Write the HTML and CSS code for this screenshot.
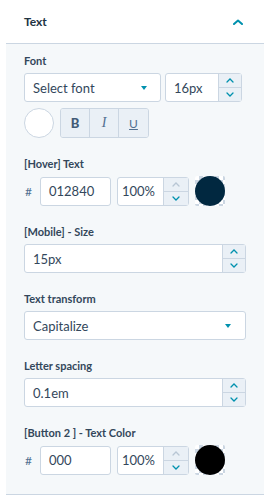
FILE: index.html
```html
<!DOCTYPE html>
<html lang="en">
<head>
    <meta charset="UTF-8">
    <meta name="viewport" content="width=device-width, initial-scale=1.0">
    <title>Text settings</title>
    <link rel="stylesheet" href="styles.css">
</head>
<body>
    <section class="panel">
        <header class="panel-head">
            <span>Text</span>
            <svg class="chev-up" width="10" height="6" viewBox="0 0 10 6"><path d="M1 5L5 1.5L9 5" fill="none" stroke="#0091ae" stroke-width="2" stroke-linecap="round" stroke-linejoin="round"/></svg>
        </header>
        <div class="panel-body">
            <div class="field">
                <label>Font</label>
                <div class="row">
                    <div class="select small">
                        <span>Select font</span>
                        <i class="caret"></i>
                    </div>
                    <div class="number size">
                        <span class="val">16px</span>
                        <div class="spin">
                            <div class="up"><svg width="8" height="5" viewBox="0 0 8 5"><path d="M1 4L4 1L7 4" fill="none" stroke="#0091ae" stroke-width="1.3" stroke-linecap="round"/></svg></div>
                            <div class="down"><svg width="8" height="5" viewBox="0 0 8 5"><path d="M1 1L4 4L7 1" fill="none" stroke="#0091ae" stroke-width="1.3" stroke-linecap="round"/></svg></div>
                        </div>
                    </div>
                </div>
                <div class="row styles">
                    <div class="circle"></div>
                    <div class="btn-group">
                        <button class="b">B</button>
                        <button class="i">I</button>
                        <button class="u">U</button>
                    </div>
                </div>
            </div>

            <div class="field">
                <label>[Hover] Text</label>
                <div class="row color">
                    <span class="hash">#</span>
                    <div class="number hex"><span class="val">012840</span></div>
                    <div class="number pct">
                        <span class="val">100%</span>
                        <div class="spin">
                            <div class="up"><svg width="8" height="5" viewBox="0 0 8 5"><path d="M1 4L4 1L7 4" fill="none" stroke="#b8c6d4" stroke-width="1.3" stroke-linecap="round"/></svg></div>
                            <div class="down"><svg width="8" height="5" viewBox="0 0 8 5"><path d="M1 1L4 4L7 1" fill="none" stroke="#0091ae" stroke-width="1.3" stroke-linecap="round"/></svg></div>
                        </div>
                    </div>
                    <div class="swatch"><div class="dot navy"></div></div>
                </div>
            </div>

            <div class="field">
                <label>[Mobile] - Size</label>
                <div class="number wide">
                    <span class="val">15px</span>
                    <div class="spin">
                        <div class="up"><svg width="8" height="5" viewBox="0 0 8 5"><path d="M1 4L4 1L7 4" fill="none" stroke="#0091ae" stroke-width="1.3" stroke-linecap="round"/></svg></div>
                        <div class="down"><svg width="8" height="5" viewBox="0 0 8 5"><path d="M1 1L4 4L7 1" fill="none" stroke="#0091ae" stroke-width="1.3" stroke-linecap="round"/></svg></div>
                    </div>
                </div>
            </div>

            <div class="field">
                <label>Text transform</label>
                <div class="select wide">
                    <span>Capitalize</span>
                    <i class="caret"></i>
                </div>
            </div>

            <div class="field">
                <label>Letter spacing</label>
                <div class="number wide">
                    <span class="val">0.1em</span>
                    <div class="spin">
                        <div class="up"><svg width="8" height="5" viewBox="0 0 8 5"><path d="M1 4L4 1L7 4" fill="none" stroke="#0091ae" stroke-width="1.3" stroke-linecap="round"/></svg></div>
                        <div class="down"><svg width="8" height="5" viewBox="0 0 8 5"><path d="M1 1L4 4L7 1" fill="none" stroke="#0091ae" stroke-width="1.3" stroke-linecap="round"/></svg></div>
                    </div>
                </div>
            </div>

            <div class="field">
                <label>[Button 2 ] - Text Color</label>
                <div class="row color">
                    <span class="hash">#</span>
                    <div class="number hex"><span class="val">000</span></div>
                    <div class="number pct">
                        <span class="val">100%</span>
                        <div class="spin">
                            <div class="up"><svg width="8" height="5" viewBox="0 0 8 5"><path d="M1 4L4 1L7 4" fill="none" stroke="#b8c6d4" stroke-width="1.3" stroke-linecap="round"/></svg></div>
                            <div class="down"><svg width="8" height="5" viewBox="0 0 8 5"><path d="M1 1L4 4L7 1" fill="none" stroke="#0091ae" stroke-width="1.3" stroke-linecap="round"/></svg></div>
                        </div>
                    </div>
                    <div class="swatch"><div class="dot black"></div></div>
                </div>
            </div>
        </div>
    </section>
</body>
</html>
```

FILE: styles.css
```css
body {
    margin: 0px;
    background-color: #ffffff;
    font-family: "Lato", "Open Sans", sans-serif;
    color: #33475b;
}
.panel {
    margin: 0px 8px 0px 6px;
    border-bottom: 1px solid #cbd6e2;
}
.panel-head {
    display: flex;
    align-items: center;
    justify-content: space-between;
    height: 43px;
    padding: 0px 21px 0px 18px;
    border-bottom: 1px solid #cbd6e2;
    background-color: #ffffff;
    font-size: 12px;
    font-weight: bold;
    color: #213343;
}
.chev-up {
    margin-top: 1px;
}
.panel-body {
    display: flex;
    flex-direction: column;
    gap: 18px;
    padding: 9px 18px 19px;
    background-color: #f5f8fa;
}
.field {
    display: flex;
    flex-direction: column;
}
.field label {
    font-size: 11px;
    font-weight: bold;
    line-height: 16px;
    margin-bottom: 4px;
    color: #33475b;
}
.row {
    display: flex;
    align-items: center;
    gap: 4px;
}
.select, .number {
    display: flex;
    align-items: center;
    box-sizing: border-box;
    height: 29px;
    background-color: #ffffff;
    border: 1px solid #cbd6e2;
    border-radius: 3px;
    font-size: 13px;
}
.select {
    justify-content: space-between;
    padding: 0px 13px 0px 8px;
}
.select.small {
    width: 137px;
}
.select.wide {
    width: 222px;
    padding-right: 14px;
}
.caret {
    width: 0px;
    height: 0px;
    border-left: 3.5px solid transparent;
    border-right: 3.5px solid transparent;
    border-top: 4px solid #0091ae;
}
.val {
    flex: 1;
    padding: 0px 8px;
}
.spin {
    display: flex;
    flex-direction: column;
    align-self: stretch;
    width: 22px;
    border-left: 1px solid #cbd6e2;
    background-color: #eaf0f6;
}
.spin .up, .spin .down {
    flex: 1;
    display: flex;
    align-items: center;
    justify-content: center;
}
.spin .up {
    border-bottom: 1px solid #cbd6e2;
}
.number.size {
    width: 77px;
}
.number.wide {
    width: 222px;
}
.styles {
    margin-top: 6px;
    gap: 6px;
}
.circle {
    box-sizing: border-box;
    width: 30px;
    height: 30px;
    border-radius: 50%;
    border: 1px solid #cbd6e2;
    background-color: #ffffff;
}
.btn-group {
    display: flex;
    box-sizing: border-box;
    height: 30px;
    border: 1px solid #cbd6e2;
    border-radius: 3px;
    overflow: hidden;
}
.btn-group button {
    width: 29px;
    height: 100%;
    border: none;
    border-right: 1px solid #cbd6e2;
    background-color: #eaf0f6;
    color: #516f90;
    font-size: 12px;
    padding: 0px;
}
.btn-group button:last-child {
    border-right: none;
}
.btn-group .b {
    font-family: "Lato", sans-serif;
    font-weight: 900;
    font-size: 13px;
    color: #425b76;
}
.btn-group .i {
    font-family: "Liberation Serif", serif;
    font-style: italic;
    font-size: 14px;
}
.btn-group .u {
    text-decoration: underline;
    font-family: "Lato", sans-serif;
    font-size: 12px;
}
.color {
    gap: 6px;
}
.hash {
    width: 9px;
    font-size: 12px;
    color: #516f90;
    margin-left: 1px;
}
.number.hex {
    width: 71px;
}
.number.pct {
    width: 72px;
}
.number.pct .val {
    text-align: right;
    padding-right: 8px;
    padding-left: 4px;
}
.number.pct .spin {
    width: 24px;
}
.swatch {
    position: relative;
    width: 30px;
    height: 30px;
    border-radius: 2px;
    background-color: #ffffff;
    background-image: conic-gradient(#cbd6e2 25%, #ffffff 0 50%, #cbd6e2 0 75%, #ffffff 0);
    background-size: 8px 8px;
}
.dot {
    position: absolute;
    inset: 0px;
    border-radius: 50%;
}
.dot.navy {
    background-color: #012840;
}
.dot.black {
    background-color: #000000;
}
```
